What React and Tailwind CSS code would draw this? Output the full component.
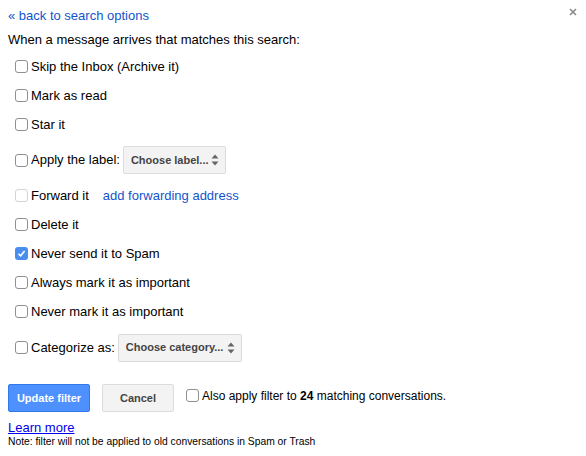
const font = { fontFamily: '"Liberation Sans", Arial, sans-serif' };

function Box({ checked = false, faded = false }) {
    if (checked) {
        return (
            <span className="inline-flex w-[13px] h-[13px] shrink-0 items-center justify-center rounded-[3px] bg-[#4a8ef0]">
                <svg width="9" height="9" viewBox="0 0 9 9">
                    <path d="M1.5 4.8 L3.6 6.8 L7.6 2" fill="none" stroke="#fff" strokeWidth="1.6" />
                </svg>
            </span>
        );
    }
    return (
        <span
            className={
                'inline-block w-[13px] h-[13px] shrink-0 rounded-[3px] border bg-white ' +
                (faded ? 'border-[#d4d4d4]' : 'border-[#8f8f8f]')
            }
        />
    );
}

function Row({ label, checked, faded, children }) {
    return (
        <div className="flex items-center pl-[7px] h-[29px]">
            <Box checked={checked} faded={faded} />
            <span className="ml-[3px] text-[13px] text-black">{label}</span>
            {children}
        </div>
    );
}

function Select({ text, width }) {
    return (
        <div
            className={`flex items-center justify-between h-[28px] ${width} ml-[3px] pl-[7px] pr-[6px] rounded-[2px] border border-[#dcdcdc] bg-[#f3f3f3]`}
        >
            <span className="text-[11px] font-bold text-[#444]">{text}</span>
            <svg width="8" height="12" viewBox="0 0 8 12">
                <path d="M4 0.5 L7.5 4.5 L0.5 4.5 Z M4 11.5 L7.5 7.5 L0.5 7.5 Z" fill="#666" />
            </svg>
        </div>
    );
}

export default function App() {
    return (
        <div className="relative w-[586px] h-[456px] bg-white pl-[8px]" style={font}>
            <svg className="absolute left-[569px] top-[8px]" width="8" height="8" viewBox="0 0 8 8">
                <path d="M1 1 L7 7 M7 1 L1 7" stroke="#8a8a8a" strokeWidth="1.6" />
            </svg>

            <div className="pt-[3px] h-[28px]">
                <a className="text-[13px] text-[#1155cc]">« back to search options</a>
            </div>
            <div className="h-[24px] flex items-center text-[13px] text-black">
                When a message arrives that matches this search:
            </div>

            <div>
                <Row label="Skip the Inbox (Archive it)" />
                <Row label="Mark as read" />
                <Row label="Star it" />
                <div className="h-[42px] flex items-center">
                    <Row label="Apply the label:">
                        <Select text="Choose label..." width="w-[103px]" />
                    </Row>
                </div>
                <div className="flex items-center h-[29px] pl-[7px]">
                    <Box faded />
                    <span className="ml-[3px] text-[13px] text-black">Forward it</span>
                    <a className="ml-[14px] text-[13px] text-[#1155cc]">add forwarding address</a>
                </div>
                <Row label="Delete it" />
                <Row label="Never send it to Spam" checked />
                <Row label="Always mark it as important" />
                <Row label="Never mark it as important" />
                <div className="h-[43px] flex items-center">
                    <Row label="Categorize as:">
                        <Select text="Choose category..." width="w-[124px]" />
                    </Row>
                </div>
            </div>

            <div className="flex items-center mt-[15px]">
                <button className="h-[28px] w-[82px] rounded-[2px] border border-[#3079ed] bg-[#4d90fe] text-[11px] font-bold text-white">
                    Update filter
                </button>
                <button className="ml-[12px] h-[28px] w-[72px] rounded-[2px] border border-[#dcdcdc] bg-[#f3f3f3] text-[11px] font-bold text-[#444]">
                    Cancel
                </button>
                <div className="ml-[12px] flex items-center -mt-[5px]">
                    <Box />
                    <span className="ml-[3px] text-[12px] text-black">
                        Also apply filter to <b>24</b> matching conversations.
                    </span>
                </div>
            </div>

            <div className="mt-[7px] leading-[15px]">
                <a className="text-[13px] text-[#0000ee] underline">Learn more</a>
            </div>
            <div className="text-[10.3px] leading-[13px] text-black">
                Note: filter will not be applied to old conversations in Spam or Trash
            </div>
        </div>
    );
}
